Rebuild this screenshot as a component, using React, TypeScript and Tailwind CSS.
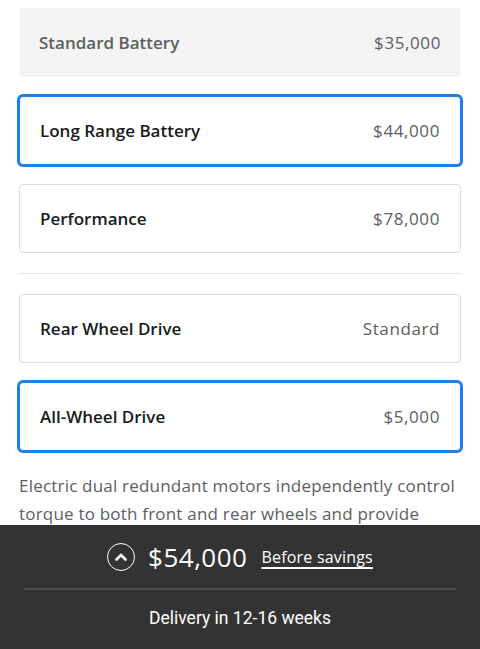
import React from "react";

const font = { fontFamily: '"Open Sans", "Liberation Sans", sans-serif' };

function Option({ label, price, selected, muted }: { label: string; price: string; selected?: boolean; muted?: boolean }) {
  const base = "shrink-0 flex items-center justify-between h-[69px] px-[20px] rounded-[4px]";
  const cls = muted
    ? `${base} bg-[#f4f4f4]`
    : selected
    ? `${base} border border-[#1b7ff0] ring-2 ring-[#1b7ff0] bg-white`
    : `${base} border border-[#dcdcdc] bg-white`;
  return (
    <div className={cls}>
      <span className={`text-[17px] font-semibold ${muted ? "text-[#5c5e62]" : "text-[#171a20]"}`}>{label}</span>
      <span className="text-[17px] tracking-[0.6px] text-[#5c5e62]">{price}</span>
    </div>
  );
}

export default function App() {
  return (
    <div className="w-[480px] h-[649px] flex flex-col bg-white overflow-hidden" style={font}>
      <div className="flex-1 min-h-0 overflow-hidden px-[19px] pt-[8px] flex flex-col">
        <Option label="Standard Battery" price="$35,000" muted />
        <div className="shrink-0 mt-[19px]"><Option label="Long Range Battery" price="$44,000" selected /></div>
        <div className="shrink-0 mt-[19px]"><Option label="Performance" price="$78,000" /></div>
        <div className="shrink-0 mt-[20px] h-px bg-[#e2e2e2]" />
        <div className="shrink-0 mt-[20px]"><Option label="Rear Wheel Drive" price="Standard" /></div>
        <div className="shrink-0 mt-[19px]"><Option label="All-Wheel Drive" price="$5,000" selected /></div>
        <p className="shrink-0 mt-[21px] text-[17px] tracking-[0.2px] leading-[28px] text-[#5c5e62]">
          Electric dual redundant motors independently control torque to both front and rear wheels and provide
        </p>
      </div>
      <div className="h-[124px] bg-[#333333] flex flex-col shrink-0">
        <div className="h-[63px] flex items-center justify-center gap-[13px] pt-[1px]">
          <div className="w-[28px] h-[28px] rounded-full border-[1.5px] border-white flex items-center justify-center">
            <svg width="14" height="10" viewBox="0 0 14 10" fill="none">
              <path d="M2.5 7.5 L7 3 L11.5 7.5" stroke="white" strokeWidth="2.6" strokeLinecap="round" strokeLinejoin="round" />
            </svg>
          </div>
          <span className="text-[26px] leading-[32px] text-white font-normal tracking-[0.5px]">$54,000</span>
          <span className="text-[16px] leading-[22px] text-white underline underline-offset-[4px] decoration-[1.5px] ml-[1px] tracking-[0.2px]">Before savings</span>
        </div>
        <div className="mx-[24px] h-[2px] bg-[#4e4e4e]" />
        <div className="flex-1 flex items-center justify-center pb-[2px]">
          <span className="text-[17.5px] text-white" style={{ fontFamily: "Roboto, sans-serif" }}>Delivery in 12-16 weeks</span>
        </div>
      </div>
    </div>
  );
}
